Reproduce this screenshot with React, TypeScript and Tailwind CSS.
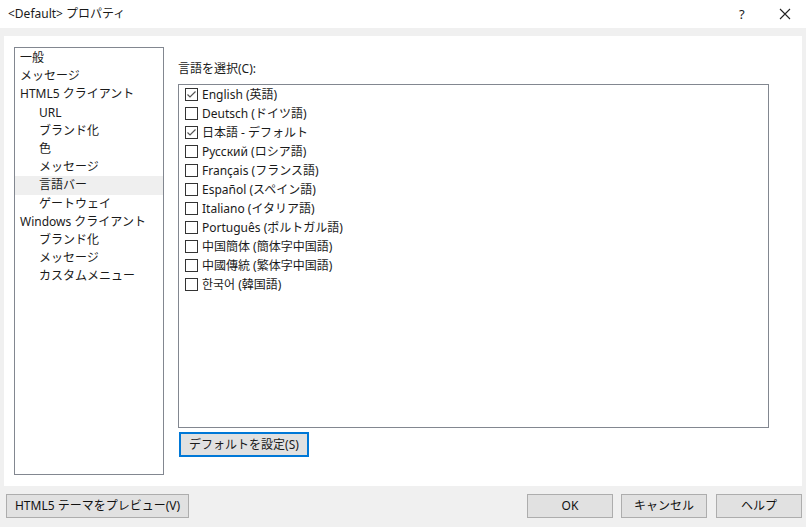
import React from "react";

type TreeItem = { label: string; level: number; selected?: boolean };

const TREE: TreeItem[] = [
  { label: "一般", level: 0 },
  { label: "メッセージ", level: 0 },
  { label: "HTML5 クライアント", level: 0 },
  { label: "URL", level: 1 },
  { label: "ブランド化", level: 1 },
  { label: "色", level: 1 },
  { label: "メッセージ", level: 1 },
  { label: "言語バー", level: 1, selected: true },
  { label: "ゲートウェイ", level: 1 },
  { label: "Windows クライアント", level: 0 },
  { label: "ブランド化", level: 1 },
  { label: "メッセージ", level: 1 },
  { label: "カスタムメニュー", level: 1 },
];

const LANGS: { label: string; checked: boolean }[] = [
  { label: "English (英語)", checked: true },
  { label: "Deutsch (ドイツ語)", checked: false },
  { label: "日本語 - デフォルト", checked: true },
  { label: "Русский (ロシア語)", checked: false },
  { label: "Français (フランス語)", checked: false },
  { label: "Español (スペイン語)", checked: false },
  { label: "Italiano (イタリア語)", checked: false },
  { label: "Português (ポルトガル語)", checked: false },
  { label: "中国簡体 (簡体字中国語)", checked: false },
  { label: "中國傳統 (繁体字中国語)", checked: false },
  { label: "한국어 (韓国語)", checked: false },
];

const FONT = {
  fontFamily: '"Noto Sans", "Noto Sans CJK JP", sans-serif',
};

function CheckBox({ checked }: { checked: boolean }) {
  return (
    <span className="flex h-[13px] w-[13px] flex-none items-center justify-center border border-[#333333] bg-white">
      {checked && (
        <svg width="11" height="11" viewBox="0 0 11 11">
          <path d="M1.5 5.5 L4 8 L9.5 2.5" fill="none" stroke="#555555" strokeWidth="1.2" />
        </svg>
      )}
    </span>
  );
}

function Button({ label, width }: { label: string; width: string }) {
  return (
    <div
      className={`flex h-[24px] items-center justify-center border border-[#adadad] bg-[#e1e1e1] text-[12px] text-[#111] ${width}`}
    >
      {label}
    </div>
  );
}

export default function App() {
  return (
    <div
      className="flex h-[527px] w-[806px] flex-col overflow-hidden bg-[#f0f0f0] leading-[18px] text-[#1a1a1a]"
      style={FONT}
    >
      {/* title bar */}
      <div className="flex h-[28px] flex-none items-center bg-white pl-[8px] text-[12px]">
        <span className="flex-1">&lt;Default&gt; プロパティ</span>
        <span className="w-[40px] text-[13px]">?</span>
        <svg width="12" height="12" viewBox="0 0 12 12" className="mr-[15px]">
          <path d="M1 1 L11 11 M11 1 L1 11" stroke="#222" strokeWidth="1.1" />
        </svg>
      </div>

      {/* main panel */}
      <div className="mx-[4px] mt-[8px] flex h-[450px] flex-none bg-white pl-[10px] pt-[11px]">
        <div className="h-[428px] w-[150px] flex-none border border-[#828790] pt-[1px]">
          {TREE.map((t, i) => (
            <div
              key={i}
              className={`h-[18.2px] whitespace-nowrap text-[12px] leading-[18px] ${
                t.level ? "pl-[24px]" : "pl-[5px]"
              } ${t.selected ? "bg-[#efefef]" : ""}`}
            >
              {t.label}
            </div>
          ))}
        </div>

        <div className="ml-[14px] flex w-[591px] flex-col">
          <div className="mt-[13px] h-[18px] text-[12px]">言語を選択(C):</div>
          <div className="mt-[6px] h-[344px] border border-[#828790]">
            {LANGS.map((l) => (
              <div key={l.label} className="flex h-[19px] items-center gap-[4px] pl-[6px] text-[12px]">
                <CheckBox checked={l.checked} />
                <span className="whitespace-nowrap">{l.label}</span>
              </div>
            ))}
          </div>
          <div className="mt-[4px] pl-[1px]">
            <div className="flex h-[25px] w-[130px] items-center justify-center border-2 border-[#0078d7] bg-[#e1e1e1] text-[12px]">
              デフォルトを設定(S)
            </div>
          </div>
        </div>
      </div>

      {/* bottom bar */}
      <div className="mt-[8px] flex pl-[6px] pr-[4px]">
        <Button label="HTML5 テーマをプレビュー(V)" width="w-[183px]" />
        <div className="flex-1" />
        <Button label="OK" width="w-[86px]" />
        <div className="w-[8px]" />
        <Button label="キャンセル" width="w-[86px]" />
        <div className="w-[9px]" />
        <Button label="ヘルプ" width="w-[86px]" />
      </div>
    </div>
  );
}
